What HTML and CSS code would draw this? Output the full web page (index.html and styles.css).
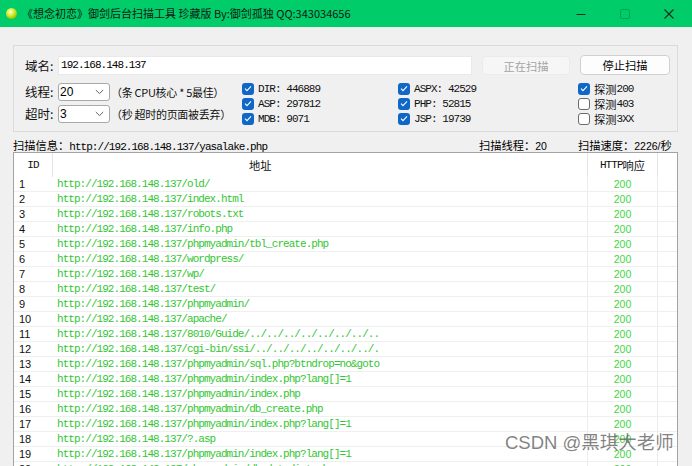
FILE: index.html
```html
<!DOCTYPE html>
<html lang="zh-CN">
<head>
<meta charset="utf-8">
<title>御剑后台扫描工具</title>
<link rel="stylesheet" href="styles.css">
</head>
<body>
<header class="titlebar">
  <span class="app-icon"></span>
  <span class="title">《想念初恋》御剑后台扫描工具 珍藏版 By:御剑孤独 QQ:343034656</span>
  <div class="controls">
    <span class="ctl"><svg width="10" height="10" viewBox="0 0 10 10"><path d="M0.5 5.5H9.5" stroke="#1b2a22" stroke-width="1"/></svg></span>
    <span class="ctl"><svg width="10" height="10" viewBox="0 0 10 10"><rect x="0.5" y="0.5" width="9" height="9" rx="1.5" fill="none" stroke="#00a552" stroke-width="1"/></svg></span>
    <span class="ctl"><svg width="10" height="10" viewBox="0 0 10 10"><path d="M0.5 0.5L9.5 9.5M9.5 0.5L0.5 9.5" stroke="#1b2a22" stroke-width="1.1"/></svg></span>
  </div>
</header>
<main class="main">
  <section class="group">
    <div class="row1">
      <span class="lbl">域名:</span>
      <div class="input mono">192.168.148.137</div>
      <div class="btn disabled">正在扫描</div>
      <div class="btn stop">停止扫描</div>
    </div>
    <div class="row2">
      <div class="opts">
        <div class="opt">
          <span class="lbl">线程:</span>
          <div class="select"><span>20</span><svg width="9" height="6" viewBox="0 0 9 6"><path d="M0.8 1L4.5 4.6L8.2 1" fill="none" stroke="#606060" stroke-width="1"/></svg></div>
          <span class="hint">（条 CPU核心 * 5最佳）</span>
        </div>
        <div class="opt">
          <span class="lbl">超时:</span>
          <div class="select"><span>3</span><svg width="9" height="6" viewBox="0 0 9 6"><path d="M0.8 1L4.5 4.6L8.2 1" fill="none" stroke="#606060" stroke-width="1"/></svg></div>
          <span class="hint">（秒 超时的页面被丢弃）</span>
        </div>
      </div>
      <div class="checks">
        <div class="chk"><span class="cb on"><svg width="8" height="7" viewBox="0 0 8 7"><path d="M1 3.6L3 5.6L7 1.4" fill="none" stroke="#fff" stroke-width="1.1"/></svg></span><span class="mono">DIR: 446889</span></div>
        <div class="chk"><span class="cb on"><svg width="8" height="7" viewBox="0 0 8 7"><path d="M1 3.6L3 5.6L7 1.4" fill="none" stroke="#fff" stroke-width="1.1"/></svg></span><span class="mono">ASP: 297812</span></div>
        <div class="chk"><span class="cb on"><svg width="8" height="7" viewBox="0 0 8 7"><path d="M1 3.6L3 5.6L7 1.4" fill="none" stroke="#fff" stroke-width="1.1"/></svg></span><span class="mono">MDB: 9071</span></div>
        <div class="chk"><span class="cb on"><svg width="8" height="7" viewBox="0 0 8 7"><path d="M1 3.6L3 5.6L7 1.4" fill="none" stroke="#fff" stroke-width="1.1"/></svg></span><span class="mono">ASPX: 42529</span></div>
        <div class="chk"><span class="cb on"><svg width="8" height="7" viewBox="0 0 8 7"><path d="M1 3.6L3 5.6L7 1.4" fill="none" stroke="#fff" stroke-width="1.1"/></svg></span><span class="mono">PHP: 52815</span></div>
        <div class="chk"><span class="cb on"><svg width="8" height="7" viewBox="0 0 8 7"><path d="M1 3.6L3 5.6L7 1.4" fill="none" stroke="#fff" stroke-width="1.1"/></svg></span><span class="mono">JSP: 19739</span></div>
        <div class="chk"><span class="cb on"><svg width="8" height="7" viewBox="0 0 8 7"><path d="M1 3.6L3 5.6L7 1.4" fill="none" stroke="#fff" stroke-width="1.1"/></svg></span><span class="cj">探测</span><span class="mono">200</span></div>
        <div class="chk"><span class="cb off"></span><span class="cj">探测</span><span class="mono">403</span></div>
        <div class="chk"><span class="cb off"></span><span class="cj">探测</span><span class="mono">3XX</span></div>
      </div>
    </div>
  </section>

  <div class="info">
    <div class="info-main"><span class="cj">扫描信息：</span><span class="mono">http://192.168.148.137/yasalake.php</span></div>
    <div class="info-threads"><span class="cj">扫描线程：</span><span class="num">20</span></div>
    <div class="info-speed"><span class="cj">扫描速度：</span><span class="num">2226/</span><span class="cj">秒</span></div>
  </div>

  <div class="list">
    <div class="hdr">
      <div class="h h-id mono">ID</div>
      <div class="h h-url"><span class="cj">地址</span></div>
      <div class="h h-st"><span class="mono">HTTP</span><span class="cj">响应</span></div>
      <div class="h h-fill"></div>
    </div>
    <div class="r"><div class="c-id">1</div><div class="c-url mono">http://192.168.148.137/old/</div><div class="c-st">200</div><div></div></div>
    <div class="r"><div class="c-id">2</div><div class="c-url mono">http://192.168.148.137/index.html</div><div class="c-st">200</div><div></div></div>
    <div class="r"><div class="c-id">3</div><div class="c-url mono">http://192.168.148.137/robots.txt</div><div class="c-st">200</div><div></div></div>
    <div class="r"><div class="c-id">4</div><div class="c-url mono">http://192.168.148.137/info.php</div><div class="c-st">200</div><div></div></div>
    <div class="r"><div class="c-id">5</div><div class="c-url mono">http://192.168.148.137/phpmyadmin/tbl_create.php</div><div class="c-st">200</div><div></div></div>
    <div class="r"><div class="c-id">6</div><div class="c-url mono">http://192.168.148.137/wordpress/</div><div class="c-st">200</div><div></div></div>
    <div class="r"><div class="c-id">7</div><div class="c-url mono">http://192.168.148.137/wp/</div><div class="c-st">200</div><div></div></div>
    <div class="r"><div class="c-id">8</div><div class="c-url mono">http://192.168.148.137/test/</div><div class="c-st">200</div><div></div></div>
    <div class="r"><div class="c-id">9</div><div class="c-url mono">http://192.168.148.137/phpmyadmin/</div><div class="c-st">200</div><div></div></div>
    <div class="r"><div class="c-id">10</div><div class="c-url mono">http://192.168.148.137/apache/</div><div class="c-st">200</div><div></div></div>
    <div class="r"><div class="c-id">11</div><div class="c-url mono">http://192.168.148.137/8010/Guide/../../../../../../../..</div><div class="c-st">200</div><div></div></div>
    <div class="r"><div class="c-id">12</div><div class="c-url mono">http://192.168.148.137/cgi-bin/ssi/../../../../../../../.</div><div class="c-st">200</div><div></div></div>
    <div class="r"><div class="c-id">13</div><div class="c-url mono">http://192.168.148.137/phpmyadmin/sql.php?btndrop=no&amp;goto</div><div class="c-st">200</div><div></div></div>
    <div class="r"><div class="c-id">14</div><div class="c-url mono">http://192.168.148.137/phpmyadmin/index.php?lang[]=1</div><div class="c-st">200</div><div></div></div>
    <div class="r"><div class="c-id">15</div><div class="c-url mono">http://192.168.148.137/phpmyadmin/index.php</div><div class="c-st">200</div><div></div></div>
    <div class="r"><div class="c-id">16</div><div class="c-url mono">http://192.168.148.137/phpmyadmin/db_create.php</div><div class="c-st">200</div><div></div></div>
    <div class="r"><div class="c-id">17</div><div class="c-url mono">http://192.168.148.137/phpmyadmin/index.php?lang[]=1</div><div class="c-st">200</div><div></div></div>
    <div class="r"><div class="c-id">18</div><div class="c-url mono">http://192.168.148.137/?.asp</div><div class="c-st">200</div><div></div></div>
    <div class="r"><div class="c-id">19</div><div class="c-url mono">http://192.168.148.137/phpmyadmin/index.php?lang[]=1</div><div class="c-st">200</div><div></div></div>
    <div class="r"><div class="c-id">20</div><div class="c-url mono">http://192.168.148.137/phpmyadmin/db_datadict.php</div><div class="c-st">200</div><div></div></div>
  </div>
</main>
<div class="watermark">CSDN @黑琪大老师</div>
</body>
</html>
```

FILE: styles.css
```css
html, body {
  margin: 0;
  padding: 0;
}
body {
  width: 692px;
  height: 466px;
  overflow: hidden;
  position: relative;
  background: #f0f0f0;
  color: #000;
  font-family: "Noto Sans CJK SC", "Liberation Sans", sans-serif;
}

.mono {
  font-family: "Liberation Mono", "Noto Sans CJK SC", monospace;
  font-size: 11px;
  letter-spacing: -0.95px;
}
.cj {
  font-family: "Noto Sans CJK SC", sans-serif;
  font-size: 11.25px;
  letter-spacing: 0;
}
.num {
  font-family: "Liberation Sans", sans-serif;
  font-size: 10.5px;
}

/* title bar */
.titlebar {
  height: 27px;
  background: #00cc69;
  display: flex;
  align-items: center;
}
.app-icon {
  width: 11px;
  height: 11px;
  border-radius: 50%;
  margin-left: 6px;
  margin-right: 5px;
  background: radial-gradient(circle at 40% 35%, #fbffd0 0%, #d8f040 35%, #98c800 70%, #5c8c00 100%);
}
.title {
  font-size: 11px;
  line-height: 1;
  color: #0d1a12;
  white-space: nowrap;
}
.controls {
  margin-left: auto;
  margin-right: 1px;
  display: flex;
}
.ctl {
  width: 44px;
  height: 27px;
  display: flex;
  align-items: center;
  justify-content: center;
}

/* main area */
.main {
  padding: 0 14px 0 13px;
}
.group {
  margin-top: 18px;
  height: 87px;
  box-sizing: border-box;
  border: 1px solid #dadada;
  padding: 10px 0 0 11px;
}
.row1 {
  display: flex;
  align-items: center;
  height: 19px;
}
.lbl {
  width: 33px;
  flex: none;
  font-size: 12.5px;
  line-height: 18px;
  color: #111;
}
.input {
  width: 414px;
  height: 19px;
  box-sizing: border-box;
  background: #fff;
  border: 1px solid #e9e9e9;
  padding-left: 2px;
  line-height: 17px;
  color: #000;
}
.btn {
  height: 19px;
  box-sizing: border-box;
  margin-left: 10px;
  border-radius: 4px;
  display: flex;
  align-items: center;
  justify-content: center;
  font-size: 11.25px;
}
.btn.disabled {
  width: 88px;
  background: #f6f6f6;
  border: 1px solid #ebebeb;
  color: #a3a3a3;
}
.btn.stop {
  width: 90px;
  margin-top: -1px;
  height: 20px;
  background: #fdfdfd;
  border: 1px solid #d0d0d0;
  color: #000;
}

.row2 {
  display: flex;
  margin-top: 6px;
}
.opts {
  width: 217px;
  flex: none;
  padding-top: 2px;
  display: flex;
  flex-direction: column;
  gap: 4px;
}
.opt {
  display: flex;
  align-items: center;
  height: 18px;
}
.select {
  width: 52px;
  height: 18px;
  flex: none;
  box-sizing: border-box;
  border: 1px solid #a9a9a9;
  border-radius: 3px;
  background: #fff;
  display: flex;
  align-items: center;
  justify-content: space-between;
  padding: 0 5px 0 1px;
  font-family: "Liberation Sans", sans-serif;
  font-size: 12px;
  color: #000;
}
.hint {
  margin-left: 1px;
  font-size: 11px;
  white-space: nowrap;
  letter-spacing: -0.3px;
  color: #111;
}

.checks {
  display: grid;
  grid-template-columns: 156px 180px 90px;
  grid-template-rows: repeat(3, 15px);
  grid-auto-flow: column;
}
.chk {
  display: flex;
  align-items: center;
  color: #111;
}
.cb {
  width: 12px;
  height: 12px;
  box-sizing: border-box;
  border-radius: 3px;
  margin-right: 4px;
  flex: none;
  display: flex;
  align-items: center;
  justify-content: center;
}
.cb.on {
  background: #0f67c8;
}
.cb.off {
  background: #fff;
  border: 1px solid #6b6b6b;
}

/* info line */
.info {
  display: flex;
  align-items: center;
  height: 20px;
  padding-top: 1px;
  box-sizing: border-box;
  white-space: nowrap;
}
.info-main {
  flex: 1;
}
.info-threads {
  width: 99px;
}
.info-speed {
  width: 100px;
}

/* list */
.list {
  height: 320px;
  box-sizing: border-box;
  border: 1px solid #a3a3a3;
  border-bottom: none;
  background: #fff;
  overflow: hidden;
}
.hdr {
  display: grid;
  grid-template-columns: 39px 535px 70px 1fr;
  height: 24px;
}
.h {
  display: flex;
  align-items: center;
  border-right: 1px solid #e5e5e5;
  color: #111;
}
.h-id {
  justify-content: center;
}
.h-url {
  padding-left: 196px;
}
.h-st {
  justify-content: center;
}
.h-fill {
  border-right: none;
}
.r {
  display: grid;
  grid-template-columns: 39px 535px 70px 1fr;
  height: 15px;
  box-sizing: border-box;
  border-bottom: 1px solid #efefef;
  line-height: 14px;
}
.c-id {
  padding-left: 5px;
  font-family: "Liberation Sans", sans-serif;
  font-size: 11px;
  color: #111;
}
.c-url {
  padding-left: 4px;
  color: #33c633;
  border-right: 1px solid #ececec;
  white-space: nowrap;
  overflow: hidden;
}
.c-st {
  text-align: center;
  font-family: "Liberation Sans", sans-serif;
  font-size: 10.5px;
  color: #44d444;
  border-right: 1px solid #ececec;
}

.watermark {
  position: absolute;
  left: 505px;
  top: 431px;
  font-family: "Liberation Sans", "Noto Sans CJK SC", sans-serif;
  font-size: 18.5px;
  line-height: 24px;
  color: rgba(95, 95, 95, 0.78);
  white-space: nowrap;
}
```
